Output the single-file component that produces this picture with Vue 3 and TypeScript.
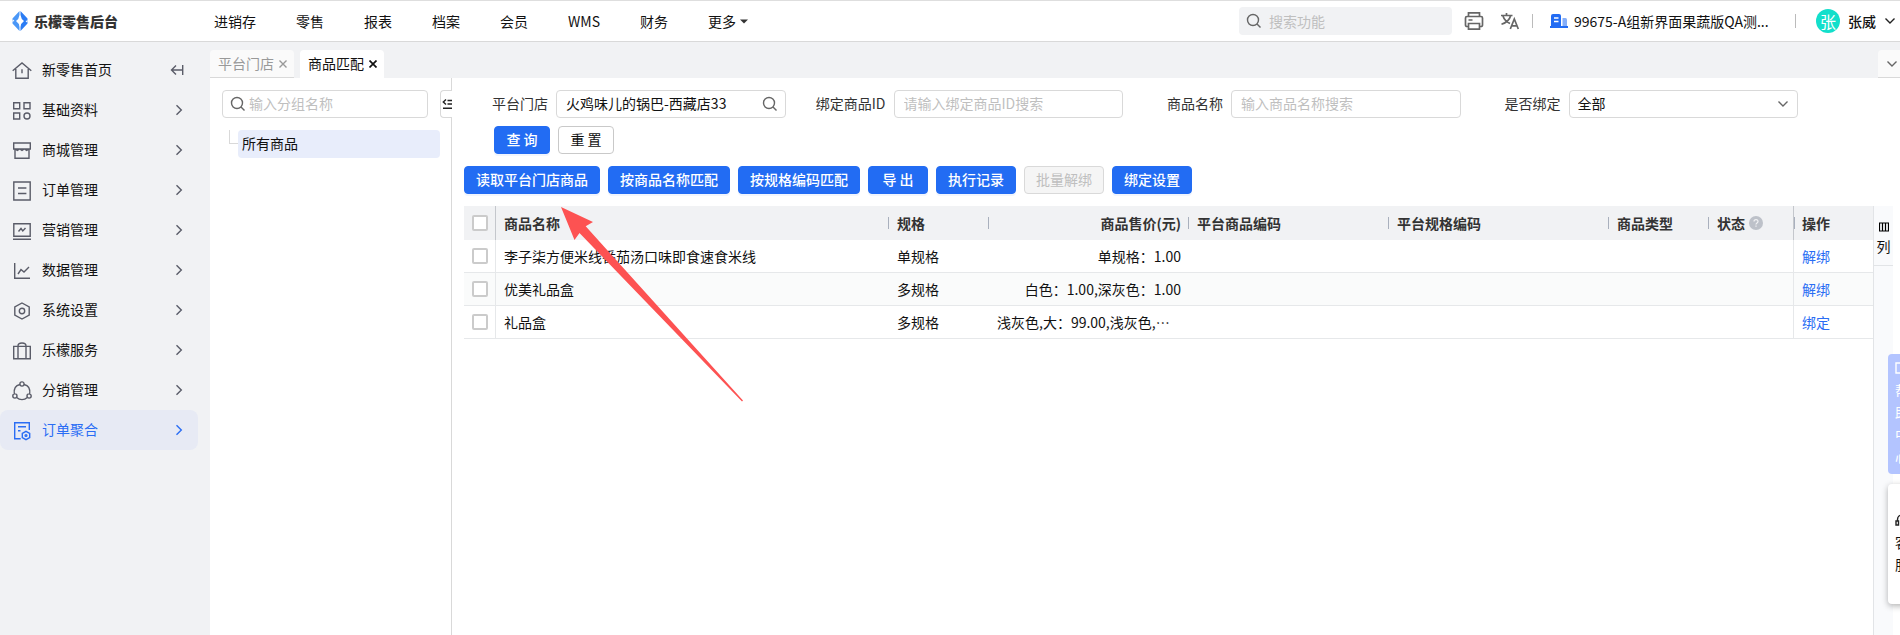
<script setup lang="ts">
import { ref } from 'vue'

interface MenuItem { label: string; icon: string }
interface Row { name: string; spec: string; price: string; clipped?: boolean; action: string }

const nav: string[] = ['进销存', '零售', '报表', '档案', '会员', 'WMS', '财务']
const menu: MenuItem[] = [
  { label: '新零售首页', icon: 'M0.7 9.8 10 2l9.3 7.8M3.8 8v9.2h12.4V8M10 8.2v4' },
  { label: '基础资料', icon: 'M1.7 1.7h6v6h-6zM12 1.7h6v6h-6zM1.7 12h6v6h-6zM12 15a3 3 0 1 0 6 0a3 3 0 1 0-6 0' },
  { label: '商城管理', icon: 'M1.7 2h16.6v6H1.7zM3 8v9.3h14V8M3 8l2.3 1.5L7.7 8 10 9.5 12.3 8l2.4 1.5L17 8' },
  { label: '订单管理', icon: 'M1.8 1h16.4v18H1.8zM6 7h8.4M6 12.5h8.4' },
  { label: '营销管理', icon: 'M1.8 2.8h16.4v12.4H1.8zM1 18.2h18M6.5 10.5 9 7.5l1.8 2.5L13.5 7' },
  { label: '数据管理', icon: 'M2.7 2v15.3H18M6 13l3-4.5 3 2.6 5-5' },
  { label: '系统设置', icon: 'M10 2l7.2 4v8L10 18l-7.2-4V6zM7.3 10a2.7 2.7 0 1 0 5.4 0a2.7 2.7 0 1 0-5.4 0' },
  { label: '乐檬服务', icon: 'M1.7 5.4h16.6v12.4H1.7zM6 17.8V5c0-4 8-4 8 0v12.8' },
  { label: '分销管理', icon: 'M7.9 3a2.1 2.1 0 1 0 4.2 0a2.1 2.1 0 1 0-4.2 0M0.8 15a2.1 2.1 0 1 0 4.2 0a2.1 2.1 0 1 0-4.2 0M15 15a2.1 2.1 0 1 0 4.2 0a2.1 2.1 0 1 0-4.2 0M7.9 3.5C3.5 4.5 1.7 8.5 2.3 13M12.1 3.5c4.4 1 6.2 5 5.6 9.5M4.7 16.5c3 2.8 7.6 2.8 10.6 0' },
  { label: '订单聚合', icon: 'M17.3 9V1.8H2.7v16h6M6 5.8h8M6 9.8h2.5M14 10.3l3.7 2.1v4.2L14 18.7l-3.7-2.1v-4.2zM13.1 14.5a.9.9 0 1 0 1.8 0a.9.9 0 1 0-1.8 0' },
]
const activeMenu = ref('订单聚合')
const store = ref('火鸡味儿的锅巴-西藏店33')
const bound = ref('全部')
const rows: Row[] = [
  { name: '李子柒方便米线番茄汤口味即食速食米线', spec: '单规格', price: '单规格\uff1a1.00', action: '解绑' },
  { name: '优美礼品盒', spec: '多规格', price: '白色\uff1a1.00,深灰色\uff1a1.00', action: '解绑' },
  { name: '礼品盒', spec: '多规格', price: '浅灰色,大\uff1a99.00,浅灰色,…', clipped: true, action: '绑定' },
]
</script>

<template>
  <div class="app">
    <header class="topbar">
      <div class="brand">
        <svg width="16" height="20" viewBox="0 0 16 20">
          <path d="M7.5 0 .5 7.5v5L7.5 20v-4Q7 12 4 10q3-2 3.500-6z" fill="#4a97f7" />
          <path d="M8.5 0l7 7.5v5L8.5 20v-4q.5-4 3.500-6-3-2-3.500-6z" fill="#2b7cf4" />
          <path d="M0 10.800 2.500 10 1 8.500zM16 9.200 13.500 10l1.500 1.500z" fill="#fff" />
        </svg>
        <strong>乐檬零售后台</strong>
      </div>
      <nav class="nav">
        <a v-for="n in nav" :key="n" href="#">{{ n }}</a>
        <a href="#" class="more">更多<svg width="8" height="5" viewBox="0 0 8 5"><path d="M0 .5h8L4 4.500z" fill="#333" /></svg></a>
      </nav>
      <div class="tools">
        <label class="global-search">
          <svg class="ic" width="16" height="16" viewBox="0 0 16 16"><circle cx="7" cy="7" r="5.500" /><path d="M11 11l3.500 3.500" /></svg>
          <input type="text" placeholder="搜索功能" aria-label="搜索功能" />
        </label>
        <button class="icon-btn" aria-label="打印">
          <svg class="ic heavy" width="20" height="20" viewBox="0 0 20 20"><path d="M4.500 5.500V1.800h11v3.700M4.500 15.500h-1.500a1.500 1.500 0 0 1-1.500-1.500V7a1.500 1.500 0 0 1 1.500-1.500h14A1.500 1.500 0 0 1 18.500 7v7a1.500 1.500 0 0 1-1.500 1.500h-1.500M4.500 12.500h11v5.700h-11zM4.500 9h4" /></svg>
        </button>
        <button class="icon-btn lang" aria-label="语言">
          <svg class="ic heavy" width="20" height="20" viewBox="0 0 20 20"><path d="M1 4.500h11.500M6.500 2v2.500M3 5c1.200 4 3.800 6 7 7.500M10.500 5C9.500 9 6 11.800 1.500 13.300M10.300 18 14.300 8l4 10M11.700 14.800h5.200" /></svg>
        </button>
        <i class="sep"></i>
        <a href="#" class="company">
          <svg width="18" height="16" viewBox="0 0 18 16"><path d="M1 13V3q0-2 2-2h6q2 0 2 2v10z" fill="#226cf3" /><path d="M12.500 5h3q1.500 0 1.500 1.500V13h-4.500z" fill="#85aef9" /><path d="M0 13h18v2H0z" fill="#226cf3" /><path d="M4 5h4.500M4 8.500h4.500" stroke="#fff" stroke-width="1.400" /></svg>
          <span>99675-A组新界面果蔬版QA测...</span>
        </a>
        <i class="sep"></i>
        <button class="user">
          <span class="avatar">张</span>
          <span>张威</span>
          <svg class="ic dark" width="12" height="12" viewBox="0 0 12 12"><path d="M1.500 3.500 6 8l4.500-4.500" /></svg>
        </button>
      </div>
    </header>

    <div class="body">
      <aside class="sidebar">
        <a v-for="(m, i) in menu" :key="m.label" href="#" class="menu-item" :class="{ active: m.label === activeMenu }" @click.prevent="activeMenu = m.label">
          <svg class="ic lead" width="20" height="20" viewBox="0 0 20 20"><path :d="m.icon" /></svg>
          <span>{{ m.label }}</span>
          <svg v-if="i === 0" class="ic" width="14" height="12" viewBox="0 0 14 12"><path d="M6 1.500 1.500 6 6 10.500M1.500 6h11M12.700 1v10" /></svg>
          <svg v-else class="ic arrow" width="8" height="12" viewBox="0 0 8 12"><path d="M1.500 1.200 6.300 6l-4.800 4.800" /></svg>
        </a>
      </aside>

      <div class="workspace">
        <div class="tabs">
          <a href="#" class="tab"><span>平台门店</span><svg class="ic" width="8" height="8" viewBox="0 0 8 8"><path d="M.5.5l7 7M7.500.5l-7 7" /></svg></a>
          <a href="#" class="tab current"><span>商品匹配</span><svg class="ic" width="8" height="8" viewBox="0 0 8 8"><path d="M.5.5l7 7M7.500.5l-7 7" /></svg></a>
          <button class="tab-more" aria-label="更多标签"><svg class="ic" width="12" height="12" viewBox="0 0 12 12"><path d="M1.500 3.500 6 8l4.500-4.500" /></svg></button>
        </div>

        <div class="page">
          <section class="groups">
            <label class="field">
              <svg class="ic" width="16" height="16" viewBox="0 0 16 16"><circle cx="7" cy="7" r="5.500" /><path d="M11 11l3.500 3.500" /></svg>
              <input type="text" placeholder="输入分组名称" aria-label="分组名称" />
            </label>
            <div class="tree">
              <i class="branch"></i>
              <button class="node">所有商品</button>
            </div>
            <button class="collapse" aria-label="收起">
              <svg class="ic dark" width="12" height="12" viewBox="0 0 12 12"><path d="M6.500 2.500H12M6.500 6H12M2 10.300h10M5 1.500 2.300 4 5 6.500" /></svg>
            </button>
          </section>

          <main class="main">
            <form class="filters" @submit.prevent>
              <div class="cell">
                <label for="store">平台门店</label>
                <span class="field"><input id="store" v-model="store" type="text" /><svg class="ic" width="16" height="16" viewBox="0 0 16 16"><circle cx="7" cy="7" r="5.500" /><path d="M11 11l3.500 3.500" /></svg></span>
              </div>
              <div class="cell">
                <label for="pid">绑定商品ID</label>
                <span class="field"><input id="pid" type="text" placeholder="请输入绑定商品ID搜索" /></span>
              </div>
              <div class="cell">
                <label for="pname">商品名称</label>
                <span class="field"><input id="pname" type="text" placeholder="输入商品名称搜索" /></span>
              </div>
              <div class="cell">
                <label for="bound">是否绑定</label>
                <span class="field select">
                  <select id="bound" v-model="bound"><option>全部</option><option>是</option><option>否</option></select>
                  <svg class="ic" width="12" height="12" viewBox="0 0 12 12"><path d="M1.500 3.500 6 8l4.500-4.500" /></svg>
                </span>
              </div>
              <div class="submit">
                <button class="btn primary">查 询</button>
                <button class="btn" type="reset">重 置</button>
              </div>
            </form>

            <div class="actions">
              <button class="btn primary">读取平台门店商品</button>
              <button class="btn primary">按商品名称匹配</button>
              <button class="btn primary">按规格编码匹配</button>
              <button class="btn primary wide">导 出</button>
              <button class="btn primary">执行记录</button>
              <button class="btn" disabled>批量解绑</button>
              <button class="btn primary">绑定设置</button>
            </div>

            <div class="grid">
              <div class="table-wrap">
                <table>
                  <colgroup>
                    <col class="w-check" /><col /><col class="w-100" /><col class="w-200" /><col class="w-200" /><col class="w-220" /><col class="w-100" /><col class="w-state" /><col class="w-op" />
                  </colgroup>
                  <thead>
                    <tr>
                      <th class="check"><input type="checkbox" aria-label="全选" /></th>
                      <th class="split">商品名称</th>
                      <th class="split">规格</th>
                      <th class="split num">商品售价(元)</th>
                      <th class="split">平台商品编码</th>
                      <th class="split">平台规格编码</th>
                      <th class="split">商品类型</th>
                      <th class="split"><span class="state">状态<svg width="14" height="14" viewBox="0 0 14 14"><circle cx="7" cy="7" r="7" fill="#bdc1c9" /><path d="M5 5.600c0-2.700 4-2.700 4 0 0 1.500-2 1.300-2 2.900M7 9.600v1.200" fill="none" stroke="#f1f2f4" stroke-width="1.200" /></svg></span></th>
                      <th class="split op">操作</th>
                    </tr>
                  </thead>
                  <tbody>
                    <tr v-for="r in rows" :key="r.name">
                      <td class="check"><input type="checkbox" :aria-label="r.name" /></td>
                      <td>{{ r.name }}</td>
                      <td>{{ r.spec }}</td>
                      <td :class="{ num: !r.clipped }">{{ r.price }}</td>
                      <td></td><td></td><td></td><td></td>
                      <td class="op"><a href="#">{{ r.action }}</a></td>
                    </tr>
                  </tbody>
                </table>
              </div>
              <div class="col-panel">
                <button>
                  <svg width="10" height="10" viewBox="0 0 10 10"><path d="M0 1h10M.5 1v8M3.500 1v8M6.500 1v8M9.500 1v8M0 9h10" fill="none" stroke="#000" stroke-width="1.200" /></svg>
                  <span>列</span>
                </button>
              </div>
            </div>
          </main>
        </div>
      </div>
    </div>

    <div class="floats">
      <button class="help">
        <svg class="ic" width="14" height="14" viewBox="0 0 14 14"><path d="M1 2h12v10H1zM7 2v10" /></svg>
        <span>帮助中心</span>
      </button>
      <button class="service">
        <svg class="ic dark" width="14" height="14" viewBox="0 0 14 14"><path d="M2.500 8V6.500a4.500 4.500 0 0 1 9 0V8M1 8h2.500v4H1zM10.500 8H13v4h-2.500z" /></svg>
        <span>客服</span>
      </button>
    </div>
    <svg class="pointer" width="184" height="196" viewBox="0 0 184 196"><path d="M1 1 33 16 25.700 20.300 183 194.500 182 195.500 19.500 27 14.500 34z" fill="#fd5252" /></svg>
  </div>
</template>

<style>
body { margin: 0; }
</style>

<style scoped>
.app {
  position: relative;
  display: flex;
  flex-direction: column;
  height: 100vh;
  overflow: hidden;
  background: #f1f2f4;
  color: #111;
  font: 14px/20px "Noto Sans CJK SC", sans-serif;
}
*, *::before { box-sizing: border-box; }
a { color: inherit; text-decoration: none; }
button, input, select { margin: 0; padding: 0; border: 0; background: none; color: inherit; font: inherit; outline: none; }
input::placeholder { color: #bfbfbf; opacity: 1; }
svg { flex: none; }
.ic { fill: none; stroke: #666; stroke-width: 1.400; }
.heavy { stroke-width: 1.700; }
.dark { stroke: #222; }

.topbar {
  display: flex;
  align-items: center;
  flex: none;
  height: 42px;
  padding-left: 12px;
  border-top: 1px solid #dedede;
  border-bottom: 1px solid #d9d9d9;
  background: #fff;
}
.brand { display: flex; align-items: center; gap: 6px; width: 202px; color: #333; }
.brand strong { font-weight: 900; }
.nav { display: flex; gap: 40px; }
.more { display: flex; align-items: center; gap: 4px; }
.tools { display: flex; align-items: center; margin-left: auto; }
.global-search {
  display: flex;
  align-items: center;
  gap: 7px;
  width: 213px;
  height: 28px;
  margin-right: 12px;
  padding: 0 7px;
  border-radius: 4px;
  background: #f1f2f4;
}
.global-search input { min-width: 0; flex: 1; }
.icon-btn { display: flex; margin-right: 16px; }
.lang { margin-right: 12px; }
.sep { width: 1px; height: 14px; background: #bbb; }
.company { display: flex; align-items: center; gap: 6px; width: 245px; margin-left: 17px; white-space: nowrap; }
.user { display: flex; align-items: center; gap: 8px; margin: 0 4px 0 20px; font-weight: 500; }
.avatar { width: 24px; height: 24px; border-radius: 50%; background: #13dfcb; color: #fff; font-size: 16px; line-height: 24px; font-weight: 400; text-align: center; }

.body { display: flex; flex: 1; min-height: 0; }
.sidebar { flex: none; width: 210px; padding: 8px 12px 0 0; }
.menu-item { display: flex; align-items: center; height: 40px; padding: 0 14px 0 12px; border-radius: 8px; }
.menu-item span { flex: 1; margin-left: 10px; padding-bottom: 2px; }
.menu-item .ic { stroke: #5a5c68; }
.menu-item .lead { margin-top: 2px; }
.menu-item .arrow { margin-right: 1px; }
.active { background: #e7eaf4; color: #2a6df4; }
.menu-item.active .ic { stroke: #2a6df4; }

.workspace { display: flex; flex: 1; flex-direction: column; min-width: 0; }
.tabs { display: flex; gap: 6px; padding-top: 8px; }
.tab { display: flex; align-items: center; gap: 5px; height: 28px; padding: 0 7px 0 8px; border-bottom: 1px solid #d9d9d9; border-radius: 4px 4px 0 0; background: #fafafa; color: #999; }
.tab span { padding-bottom: 1px; }
.tab .ic { stroke: #999; }
.tab.current { border-color: #fff; background: #fff; color: #111; }
.tab.current .ic { stroke: #111; stroke-width: 1.700; }
.tab-more { display: flex; align-items: center; width: 22px; margin-left: auto; padding-left: 8px; border-bottom: 1px solid #d9d9d9; border-radius: 4px 0 0 0; background: #fafafa; }

.page { display: flex; flex: 1; min-height: 0; background: #fff; }
.groups { position: relative; flex: none; width: 242px; padding: 12px 11px 0 12px; border-right: 1px solid #d9d9d9; }
.groups > .field { gap: 3px; margin-right: 12px; padding: 0 7px; }
.field { display: flex; align-items: center; height: 28px; padding: 0 7px 0 9px; border: 1px solid #d9d9d9; border-radius: 4px; background: #fff; }
.field input, .field select { flex: 1; min-width: 0; height: 26px; padding-bottom: 2px; }
.tree { display: flex; margin-top: 12px; }
.branch { width: 9px; height: 14px; margin-left: 7px; border: solid #d9d9d9; border-width: 0 0 1px 1px; }
.node { flex: 1; height: 28px; padding: 0 4px 2px; border-radius: 4px; background: #e8edfb; text-align: left; }
.collapse { position: absolute; top: 12px; right: -1px; display: flex; align-items: center; width: 12px; height: 28px; border: 1px solid #d9d9d9; border-right: 0; border-radius: 4px 0 0 4px; background: #fff; overflow: hidden; }

.main { display: flex; flex: 1; flex-direction: column; min-width: 0; padding: 12px 7px 0 12px; }
.filters { display: grid; grid-template-columns: repeat(4, 1fr); gap: 8px 16px; padding-right: 95px; }
.cell { display: flex; align-items: center; gap: 8px; min-width: 0; }
.cell label { flex: none; width: 84px; padding-bottom: 2px; color: #333; text-align: right; }
.cell .field { flex: 1; min-width: 0; }
.field.select { position: relative; padding: 0; }
.select select { width: 100%; padding: 0 8px 2px; appearance: none; }
.select .ic { position: absolute; right: 8px; pointer-events: none; }
.submit { display: flex; gap: 8px; padding-left: 30px; }
.btn { height: 28px; padding: 0 11px 2px; border: 1px solid #c9c9c9; border-radius: 4px; background: #fff; line-height: 24px; white-space: nowrap; }
.submit .btn { width: 56px; }
.primary { border-color: #226cf3; background: #226cf3; color: #fff; font-weight: 500; box-shadow: 0 2px 0 #f1f5fd; }
.btn:disabled { border-color: #d9d9d9; background: #f5f5f5; color: #bfbfbf; }
.wide { width: 60px; }
.actions { display: flex; gap: 8px; margin-top: 12px; }

.grid { display: flex; flex: 1; min-height: 0; margin-top: 12px; }
.table-wrap { flex: 1; min-width: 0; }
table { width: 100%; table-layout: fixed; border-collapse: separate; border-spacing: 0; }
.w-check { width: 32px; }
.w-100 { width: 100px; }
.w-200 { width: 200px; }
.w-220 { width: 220px; }
.w-state { width: 85px; }
.w-op { width: 80px; }
th, td { height: 33px; padding: 0 7px 0 9px; text-align: left; overflow: hidden; white-space: nowrap; }
th { height: 34px; background: #f1f2f4; color: #333; font-weight: 700; }
td { border-bottom: 1px solid #e6e8ea; }
tbody tr:nth-child(even) td { background: #fafbfb; }
.num { text-align: right; }
.check { padding-left: 8px; border-right: 1px solid #e6e8ea; }
.check + th, .check + td, .op { padding-left: 8px; }
.op { border-left: 1px solid #e6e8ea; }
th.check, th.op { border-color: #c4c7cc; }
.check input { display: block; appearance: none; width: 16px; height: 16px; border: 2px solid #cbcbcb; border-radius: 2px; background: #fff; }
.split + .split { background: linear-gradient(#a9b0bd, #a9b0bd) 0 11px / 1px 12px no-repeat #f1f2f4; }
.state { display: flex; align-items: center; gap: 4px; }
.op a { color: #2a6df4; }
.col-panel { flex: none; width: 20px; border-left: 1px solid #e2e4e7; background: #f9fafc; }
.col-panel button { display: flex; flex-direction: column; align-items: center; gap: 4px; width: 100%; height: 60px; padding-top: 16px; border-bottom: 1px solid #e2e4e7; }

.floats { position: absolute; top: 354px; left: calc(100% - 12px); display: flex; flex-direction: column; gap: 10px; }
.floats button { display: flex; flex-direction: column; align-items: center; justify-content: center; gap: 4px; width: 28px; height: 120px; padding: 0 7px; border-radius: 4px; line-height: 22px; white-space: normal; }
.help { background: #b3c4ff; color: #fff; }
.help .ic { stroke: #fff; }
.service { background: #fff; box-shadow: 0 2px 6px #0000004d; }
.pointer { position: absolute; top: 206px; left: 560px; pointer-events: none; }
</style>
